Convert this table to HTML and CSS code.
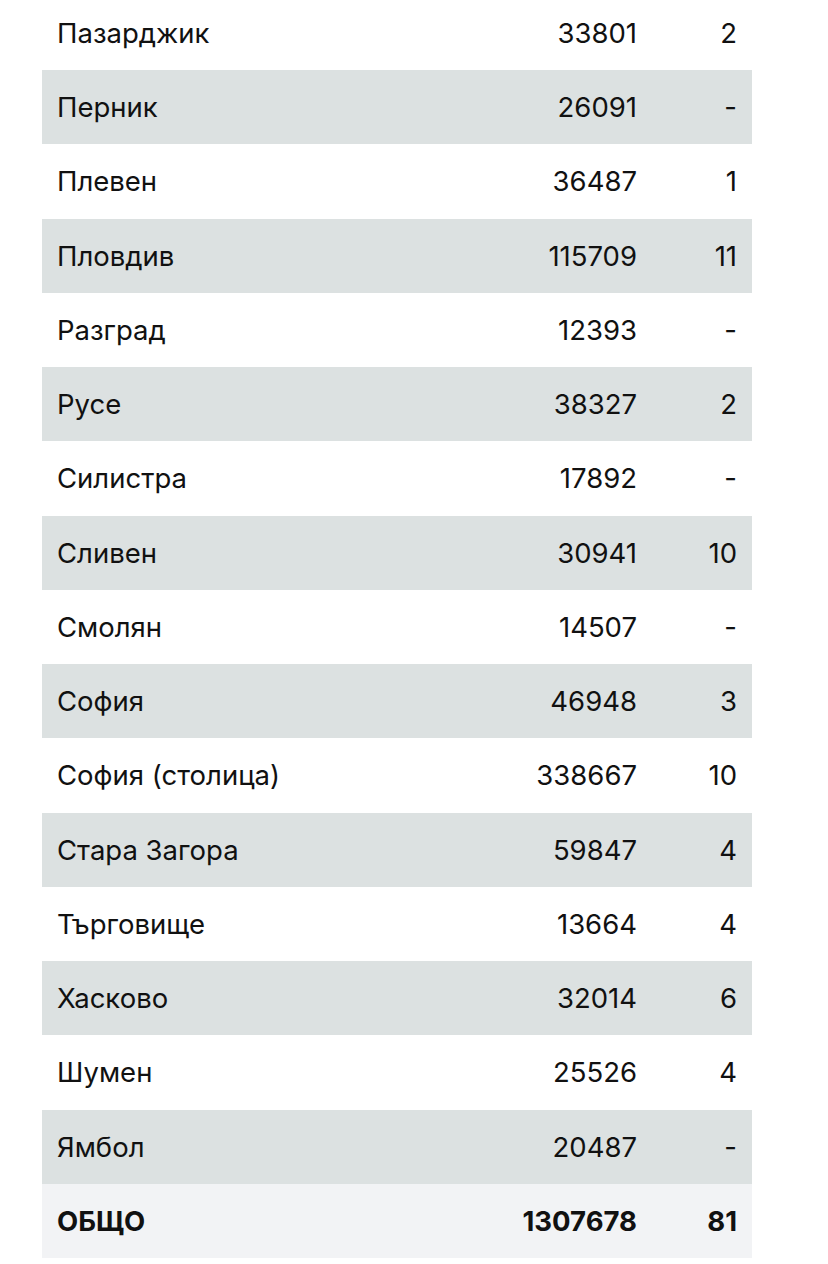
FILE: index.html
```html
<!DOCTYPE html>
<html lang="bg">
<head>
<meta charset="utf-8">
<link rel="stylesheet" href="styles.css">
</head>
<body>
<div class="table" lang="bg">
  <div class="row"><div class="c name">Пазарджик</div><div class="c num">33801</div><div class="c cnt">2</div></div>
  <div class="row alt"><div class="c name">Перник</div><div class="c num">26091</div><div class="c cnt">-</div></div>
  <div class="row"><div class="c name">Плевен</div><div class="c num">36487</div><div class="c cnt">1</div></div>
  <div class="row alt"><div class="c name">Пловдив</div><div class="c num">115709</div><div class="c cnt">11</div></div>
  <div class="row"><div class="c name">Разград</div><div class="c num">12393</div><div class="c cnt">-</div></div>
  <div class="row alt"><div class="c name">Русе</div><div class="c num">38327</div><div class="c cnt">2</div></div>
  <div class="row"><div class="c name">Силистра</div><div class="c num">17892</div><div class="c cnt">-</div></div>
  <div class="row alt"><div class="c name">Сливен</div><div class="c num">30941</div><div class="c cnt">10</div></div>
  <div class="row"><div class="c name">Смолян</div><div class="c num">14507</div><div class="c cnt">-</div></div>
  <div class="row alt"><div class="c name">София</div><div class="c num">46948</div><div class="c cnt">3</div></div>
  <div class="row"><div class="c name">София (столица)</div><div class="c num">338667</div><div class="c cnt">10</div></div>
  <div class="row alt"><div class="c name">Стара Загора</div><div class="c num">59847</div><div class="c cnt">4</div></div>
  <div class="row"><div class="c name">Търговище</div><div class="c num">13664</div><div class="c cnt">4</div></div>
  <div class="row alt"><div class="c name">Хасково</div><div class="c num">32014</div><div class="c cnt">6</div></div>
  <div class="row"><div class="c name">Шумен</div><div class="c num">25526</div><div class="c cnt">4</div></div>
  <div class="row alt"><div class="c name">Ямбол</div><div class="c num">20487</div><div class="c cnt">-</div></div>
  <div class="row total"><div class="c name">ОБЩО</div><div class="c num">1307678</div><div class="c cnt">81</div></div>
</div>
</body>
</html>
```
FILE: styles.css
```css
html, body {
  margin: 0;
  padding: 0;
  background: #ffffff;
}
body {
  font-family: "Inter", "Liberation Sans", sans-serif;
  color: #111111;
  overflow: hidden;
}
.table {
  margin: -4.25px 0 0 42px;
  width: 710px;
}
.row {
  display: grid;
  grid-template-columns: 1fr 200px 100px;
  height: 74.25px;
  align-items: center;
  font-size: 27.5px;
}
.row.alt {
  background: #dce1e1;
}
.row.total {
  background: #f2f3f5;
  font-weight: 700;
}
.c {
  padding: 0 15px;
  white-space: nowrap;
}
.num, .cnt {
  text-align: right;
}
```
